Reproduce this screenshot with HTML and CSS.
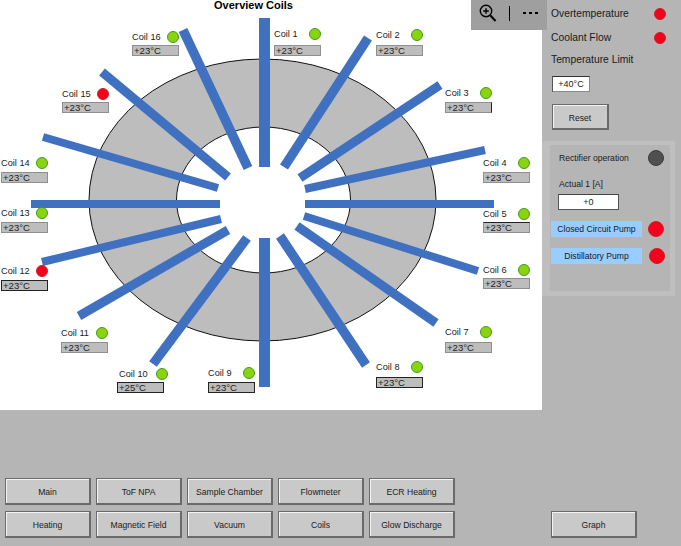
FILE: index.html
```html
<!DOCTYPE html>
<html lang="en">
<head>
<meta charset="utf-8">
<title>Overview Coils</title>
<link rel="stylesheet" href="styles.css">
</head>
<body>
<div class="app">
  <div class="top">
    <main class="canvas">
      <h1 class="title">Overview Coils</h1>
      <svg class="diagram" width="542" height="410" viewBox="0 0 542 410" aria-hidden="true">
        <ellipse class="ring" cx="262.5" cy="200" rx="173.5" ry="141"/>
        <ellipse class="hole" cx="263.5" cy="200" rx="87" ry="73"/>
        <g class="bars">
          <line class="bar-v" x1="264.5" y1="18" x2="264.5" y2="167"/>
          <line class="bar-w" x1="368" y1="38" x2="284" y2="167"/>
          <line x1="440" y1="85" x2="300" y2="178"/>
          <line class="bar-n" x1="485" y1="150" x2="305" y2="189"/>
          <line class="bar-h" x1="494" y1="204" x2="305" y2="204"/>
          <line class="bar-n" x1="478" y1="271" x2="304" y2="216"/>
          <line x1="436" y1="323" x2="297" y2="226"/>
          <line class="bar-w" x1="366" y1="365" x2="280" y2="236"/>
          <line class="bar-v" x1="264.5" y1="387" x2="264.5" y2="238"/>
          <line class="bar-w" x1="153" y1="364" x2="247" y2="238"/>
          <line x1="79" y1="316" x2="228" y2="230"/>
          <line class="bar-n" x1="42" y1="262" x2="221" y2="219"/>
          <line class="bar-h" x1="31" y1="204" x2="220" y2="204"/>
          <line class="bar-n" x1="43" y1="137" x2="218" y2="188"/>
          <line x1="102" y1="72" x2="228" y2="177"/>
          <line class="bar-w" x1="183" y1="30" x2="248" y2="168"/>
        </g>
      </svg>
      <div class="coil c1"><div class="coil-head"><span>Coil 1</span><i class="led ok"></i></div><div class="temp">+23°C</div></div>
      <div class="coil c2"><div class="coil-head"><span>Coil 2</span><i class="led ok"></i></div><div class="temp">+23°C</div></div>
      <div class="coil c3"><div class="coil-head"><span>Coil 3</span><i class="led ok"></i></div><div class="temp">+23°C</div></div>
      <div class="coil c4"><div class="coil-head"><span>Coil 4</span><i class="led ok"></i></div><div class="temp">+23°C</div></div>
      <div class="coil c5"><div class="coil-head"><span>Coil 5</span><i class="led ok"></i></div><div class="temp">+23°C</div></div>
      <div class="coil c6"><div class="coil-head"><span>Coil 6</span><i class="led ok"></i></div><div class="temp">+23°C</div></div>
      <div class="coil c7"><div class="coil-head"><span>Coil 7</span><i class="led ok"></i></div><div class="temp">+23°C</div></div>
      <div class="coil c8"><div class="coil-head"><span>Coil 8</span><i class="led ok"></i></div><div class="temp">+23°C</div></div>
      <div class="coil c9"><div class="coil-head"><span>Coil 9</span><i class="led ok"></i></div><div class="temp">+23°C</div></div>
      <div class="coil c10"><div class="coil-head"><span>Coil 10</span><i class="led ok"></i></div><div class="temp">+25°C</div></div>
      <div class="coil c11"><div class="coil-head"><span>Coil 11</span><i class="led ok"></i></div><div class="temp">+23°C</div></div>
      <div class="coil c12"><div class="coil-head"><span>Coil 12</span><i class="led alarm"></i></div><div class="temp">+23°C</div></div>
      <div class="coil c13"><div class="coil-head"><span>Coil 13</span><i class="led ok"></i></div><div class="temp">+23°C</div></div>
      <div class="coil c14"><div class="coil-head"><span>Coil 14</span><i class="led ok"></i></div><div class="temp">+23°C</div></div>
      <div class="coil c15"><div class="coil-head"><span>Coil 15</span><i class="led alarm"></i></div><div class="temp">+23°C</div></div>
      <div class="coil c16"><div class="coil-head"><span>Coil 16</span><i class="led ok"></i></div><div class="temp">+23°C</div></div>
    </main>
    <aside class="side">
      <div class="status"><span>Overtemperature</span><i class="led alarm"></i></div>
      <div class="status"><span>Coolant Flow</span><i class="led alarm"></i></div>
      <div class="limit-label">Temperature Limit</div>
      <div class="limit-input">+40°C</div>
      <button class="btn reset" type="button">Reset</button>
      <section class="group">
        <div class="rect-row"><span>Rectifier operation</span><i class="led-lg off"></i></div>
        <div class="actual-label">Actual 1 [A]</div>
        <div class="actual-input">+0</div>
        <div class="pump"><span class="pump-name">Closed Circuit Pump</span><i class="led-lg alarm"></i></div>
        <div class="pump pump-b"><span class="pump-name">Distillatory Pump</span><i class="led-lg alarm"></i></div>
      </section>
    </aside>
  </div>
  <nav class="bottom">
    <div class="nav-grid">
      <button class="btn" type="button">Main</button>
      <button class="btn" type="button">ToF NPA</button>
      <button class="btn" type="button">Sample Chamber</button>
      <button class="btn" type="button">Flowmeter</button>
      <button class="btn" type="button">ECR Heating</button>
      <button class="btn" type="button">Heating</button>
      <button class="btn" type="button">Magnetic Field</button>
      <button class="btn" type="button">Vacuum</button>
      <button class="btn" type="button">Coils</button>
      <button class="btn" type="button">Glow Discharge</button>
    </div>
    <button class="btn graph" type="button">Graph</button>
  </nav>
  <div class="toolbar">
    <svg class="zoom-icon" width="20" height="20" viewBox="0 0 20 20" aria-hidden="true">
      <circle cx="7" cy="8" r="5.7"/>
      <path d="M4.2 8h5.6M7 5.2v5.6"/>
      <path class="handle" d="M11.2 12.2 16.6 18"/>
    </svg>
    <span class="tool-sep"></span>
    <span class="tool-dots"><i></i><i></i><i></i></span>
  </div>
</div>
</body>
</html>
```

FILE: styles.css
```css
* { box-sizing: border-box; }
html, body { margin: 0; padding: 0; }
body {
  width: 681px;
  height: 546px;
  overflow: hidden;
  background: #b5b5b5;
  font-family: "Liberation Sans", Arial, sans-serif;
  color: #1a1a1a;
}
.app { position: relative; width: 681px; height: 546px; display: flex; flex-direction: column; }
.top { display: flex; height: 410px; }

/* diagram */
.canvas { position: relative; width: 542px; height: 410px; background: #fff; overflow: hidden; }
.title {
  position: absolute;
  left: 0; top: -1px;
  width: 507px;
  margin: 0;
  text-align: center;
  font-size: 11px;
  line-height: 13px;
  font-weight: 700;
  color: #000;
}
.diagram { display: block; }
.ring { fill: #bdbdbd; stroke: #111; stroke-width: 1; }
.hole { fill: #fff; stroke: #111; stroke-width: 1; }
.bars line { stroke: #4071c1; stroke-width: 9; }
.bars .bar-v { stroke-width: 11; }
.bars .bar-h { stroke-width: 8; }
.bars .bar-w { stroke-width: 9.5; }
.bars .bar-n { stroke-width: 8; }

.coil { position: absolute; width: 47px; left: var(--x); top: var(--y); }
.coil-head {
  display: flex;
  justify-content: space-between;
  align-items: center;
  height: 12px;
  margin-bottom: var(--g);
  font-size: 9.2px;
  line-height: 12px;
}
.temp {
  height: 11px;
  padding-left: 1px;
  background: #bdbdbd;
  border: 1px solid #8f8f8f;
  font-size: 9.6px;
  line-height: 10px;
  color: #222;
}
.c1  { --x: 274px; --y: 28px;  --g: 5px; }
.c2  { --x: 376px; --y: 29px;  --g: 4px; }
.c3  { --x: 445px; --y: 87px;  --g: 3px; }
.c4  { --x: 483px; --y: 157px; --g: 3px; }
.c5  { --x: 483px; --y: 208px; --g: 2px; }
.c6  { --x: 483px; --y: 264px; --g: 2px; }
.c7  { --x: 445px; --y: 326px; --g: 4px; }
.c8  { --x: 376px; --y: 361px; --g: 4px; }
.c9  { --x: 208px; --y: 367px; --g: 3px; }
.c10 { --x: 117px; --y: 368px; --g: 2px; }
.c11 { --x: 61px;  --y: 327px; --g: 3px; }
.c12 { --x: 1px;   --y: 265px; --g: 3px; }
.c13 { --x: 1px;   --y: 207px; --g: 3px; }
.c14 { --x: 1px;   --y: 157px; --g: 3px; }
.c15 { --x: 62px;  --y: 88px;  --g: 2px; }
.c16 { --x: 132px; --y: 31px;  --g: 2px; }
.c10 .coil-head { margin-right: -4px; padding-left: 2px; }
.c8 .temp, .c9 .temp, .c10 .temp, .c12 .temp { border-color: #222; }
.c3 .temp { border-right-color: #222; }
.c5 .temp { border-top-color: #222; }

/* leds */
.led, .led-lg { display: block; flex: none; border-radius: 50%; }
.led { width: 12px; height: 12px; }
.led-lg { width: 16px; height: 16px; }
.ok { background: #8ad40f; border: 1px solid #3f9a20; }
.alarm { background: #f5001e; border: 1px solid #d02020; }
.off { background: #505050; border: 1px solid #3a3a3a; }

/* side panel */
.side { width: 139px; padding-top: 1px; font-size: 10.3px; color: #1a1a1a; }
.status {
  display: flex;
  align-items: center;
  justify-content: space-between;
  height: 24px;
  padding: 0 15px 0 9px;
}
.status .led { margin-top: 2px; }
.limit-label { height: 18px; line-height: 18px; margin-top: 2px; padding-left: 9px; }
.limit-input {
  width: 38px;
  height: 16px;
  margin: 7px 0 0 10px;
  background: #fff;
  border: 1px solid #8a8a8a;
  border-top-color: #333;
  border-left-color: #555;
  font-size: 9px;
  line-height: 14px;
  text-align: center;
}
.reset { display: block; width: 57px; height: 26px; margin: 12px 0 0 10px; }
.group {
  width: 133px;
  height: 155px;
  margin-top: 11px;
  background: #b5b5b5;
  border-style: solid;
  border-color: #bfbfbf;
  border-width: 4px 5px 5px 8px;
  font-size: 8.6px;
}
.rect-row {
  display: flex;
  align-items: center;
  justify-content: space-between;
  height: 16px;
  margin-top: 5px;
  padding: 0 6px 0 9px;
}
.actual-label { height: 14px; line-height: 14px; margin-top: 11px; padding-left: 9px; }
.actual-input {
  width: 61px;
  height: 16px;
  margin: 3px 0 0 8px;
  background: #fff;
  border: 1px solid #555;
  border-top-color: #444;
  font-size: 9px;
  line-height: 14px;
  text-align: center;
}
.pump { display: flex; align-items: center; height: 16px; margin-top: 11px; padding-left: 1px; gap: 6px; }
.pump-b { gap: 7px; }
.pump-name {
  width: 91px;
  height: 16px;
  background: #99ccff;
  line-height: 16px;
  text-align: center;
}

/* buttons */
.btn {
  padding: 2px 0 0;
  font-family: inherit;
  font-size: 8.6px;
  color: #1a1a1a;
  background: #c9c9c9;
  border: 1px solid #6a6a6a;
  border-right-width: 2px;
  border-bottom-width: 2px;
  box-shadow: inset 1px 1px 0 #f4f4f4;
}
.bottom { display: flex; padding: 68px 0 0 5px; }
.nav-grid {
  display: grid;
  grid-template-columns: repeat(5, 86px);
  grid-auto-rows: 27px;
  column-gap: 5px;
  row-gap: 6px;
}
.graph { width: 86px; height: 27px; align-self: flex-end; margin-left: 96px; }

/* toolbar overlay */
.toolbar {
  position: absolute;
  top: 0;
  left: 471px;
  width: 76px;
  height: 30px;
  display: flex;
  align-items: flex-start;
  background: #9f9f9f;
}
.zoom-icon { margin: 3px 0 0 8px; flex: none; }
.zoom-icon circle, .zoom-icon path { fill: none; stroke: #000; stroke-width: 1.4; }
.zoom-icon .handle { stroke-width: 2; }
.tool-sep { width: 1px; height: 15px; margin: 6px 0 0 10px; background: #000; flex: none; }
.tool-dots { display: flex; gap: 3px; margin: 12px 0 0 13px; }
.tool-dots i { display: block; width: 3px; height: 2px; background: #000; }
```
